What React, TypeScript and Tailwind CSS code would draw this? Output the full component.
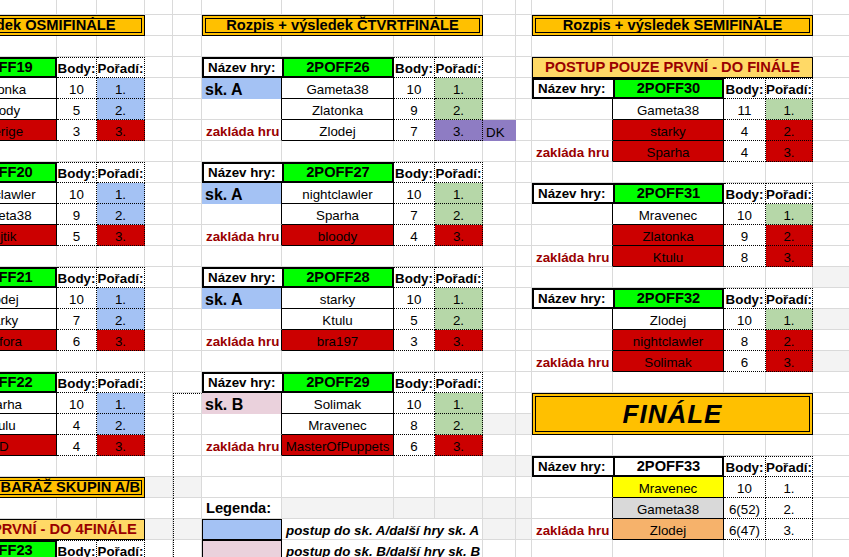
import React from "react";

type Cell = { t?: React.ReactNode; c: string; span?: number };
type Cells = Record<number, Cell>;

// gridline cells
const GRID = "border-r border-b border-[#dadada]";
const GRAY = "bg-[#f3f3f3] border-r border-b border-[#dadada]";
const PAGE = "border-r border-b border-l border-[#dadada] border-l-black [border-left-style:dotted]";
const PAGE_GRAY = PAGE + " bg-[#f3f3f3]";
const PAGE_TOP = PAGE + " border-t border-t-black [border-top-style:dotted]";

const TITLE =
  "col-span-4 flex items-center justify-center bg-[#ffc000] border-[4px] border-double border-black font-bold text-[14.67px] whitespace-nowrap";
const NOTE =
  "col-span-4 flex items-end justify-center pb-[2px] bg-[#ffd966] border border-black font-bold text-[14.67px] text-[#990000] whitespace-nowrap";

const NAZEV = "flex items-end pb-[2px] pl-[4px] border-y-2 border-l-2 border-black font-bold text-[13.33px] whitespace-nowrap";
const CODE = "flex items-end justify-center pb-[1px] border-2 border-black font-bold text-[14.67px] whitespace-nowrap";
const BP_HDR =
  "flex items-end justify-center pb-[2px] border-y border-r border-dotted border-black font-bold text-[13.33px] whitespace-nowrap";

const LBL_BLANK = "border-r border-b border-r-black border-b-[#dadada]";
const LBL_A = "flex items-end pb-[1px] pl-[3px] bg-[#a4c2f4] border-r border-r-black font-bold text-[16px]";
const LBL_B = "flex items-end pb-[1px] pl-[3px] bg-[#ead1dc] border-r border-r-black font-bold text-[16px]";
const LBL_ZAK =
  "flex items-end pb-[2px] pl-[4px] border-r border-b border-r-black border-b-[#dadada] font-bold text-[13.33px] text-[#990000] whitespace-nowrap";

const NAME = "flex items-end justify-center pb-[2px] border-r border-b border-black text-[13.33px] whitespace-nowrap";
const DOT = "flex items-end justify-center pb-[2px] border-r border-b border-dotted border-black text-[13.33px]";

const BG: Record<string, string> = {
  w: "",
  red: " bg-[#cc0000]",
  blue: " bg-[#a4c2f4]",
  green: " bg-[#b6d7a8]",
  purple: " bg-[#8e7cc3]",
  yellow: " bg-[#ffff00]",
  grey: " bg-[#d9d9d9]",
  orange: " bg-[#f6b26b]",
  lime: " bg-[#00ff00]",
};

function header(b: number, code: string, bg = "lime"): Cells {
  return {
    [b]: { t: "Název hry:", c: NAZEV },
    [b + 1]: { t: code, c: CODE + BG[bg] },
    [b + 2]: { t: "Body:", c: BP_HDR },
    [b + 3]: { t: "Pořadí:", c: BP_HDR },
  };
}

function player(b: number, label: "A" | "B" | "zak" | "", name: string, nameBg: string, body: string, pos: string, posBg: string): Cells {
  const lbl =
    label === "A"
      ? { t: "sk. A", c: LBL_A }
      : label === "B"
        ? { t: "sk. B", c: LBL_B }
        : label === "zak"
          ? { t: "zakláda hru", c: LBL_ZAK }
          : { c: LBL_BLANK };
  return {
    [b]: lbl,
    [b + 1]: { t: name, c: NAME + BG[nameBg] },
    [b + 2]: { t: body, c: DOT },
    [b + 3]: { t: pos, c: DOT + BG[posBg] },
  };
}

function row(r: number, cells: Cells, skip: number[] = []) {
  const out: React.ReactNode[] = [];
  let c = 0;
  while (c < 17) {
    if (skip.includes(c)) {
      c++;
      continue;
    }
    const cell = cells[c];
    if (cell) {
      out.push(
        <div key={`${r}-${c}`} className={cell.c}>
          {cell.t}
        </div>
      );
      c += cell.span ?? 1;
    } else {
      out.push(<div key={`${r}-${c}`} className={GRID} />);
      c++;
    }
  }
  return out;
}

export default function App() {
  const rows = [
    row(0, {}),
    row(1, {
      0: { t: "Rozpis + výsledek OSMIFINÁLE", c: TITLE, span: 4 },
      6: { t: "Rozpis + výsledek ČTVRTFINÁLE", c: TITLE, span: 4 },
      12: { t: "Rozpis + výsledek SEMIFINÁLE", c: TITLE, span: 4 },
    }),
    row(2, {}),
    row(3, {
      ...header(0, "2POFF19"),
      ...header(6, "2POFF26"),
      12: { t: "POSTUP POUZE PRVNÍ - DO FINÁLE", c: NOTE, span: 4 },
    }),
    row(4, {
      ...player(0, "", "Zlatonka", "w", "10", "1.", "blue"),
      ...player(6, "A", "Gameta38", "w", "10", "1.", "green"),
      ...header(12, "2POFF30"),
    }),
    row(5, {
      ...player(0, "", "bloody", "w", "5", "2.", "blue"),
      ...player(6, "", "Zlatonka", "w", "9", "2.", "green"),
      ...player(12, "", "Gameta38", "w", "11", "1.", "green"),
    }),
    row(6, {
      ...player(0, "", "Sverige", "red", "3", "3.", "red"),
      ...player(6, "zak", "Zlodej", "w", "7", "3.", "purple"),
      10: { t: "DK", c: "flex items-end pb-[2px] pl-[3px] bg-[#8e7cc3] text-[13.33px]" },
      ...player(12, "", "starky", "red", "4", "2.", "red"),
    }),
    row(7, {
      ...player(12, "zak", "Sparha", "red", "4", "3.", "red"),
    }),
    row(8, {
      ...header(0, "2POFF20"),
      ...header(6, "2POFF27"),
    }),
    row(9, {
      ...player(0, "", "nightclawler", "w", "10", "1.", "blue"),
      ...player(6, "A", "nightclawler", "w", "10", "1.", "green"),
      ...header(12, "2POFF31"),
    }),
    row(10, {
      ...player(0, "", "Gameta38", "w", "9", "2.", "blue"),
      ...player(6, "", "Sparha", "w", "7", "2.", "green"),
      ...player(12, "", "Mravenec", "w", "10", "1.", "green"),
    }),
    row(11, {
      ...player(0, "", "Vojtik", "red", "5", "3.", "red"),
      ...player(6, "zak", "bloody", "red", "4", "3.", "red"),
      ...player(12, "", "Zlatonka", "red", "9", "2.", "red"),
    }),
    row(12, {
      ...player(12, "zak", "Ktulu", "red", "8", "3.", "red"),
    }),
    row(13, {
      ...header(0, "2POFF21"),
      ...header(6, "2POFF28"),
      16: { c: GRAY },
    }),
    row(14, {
      ...player(0, "", "Zlodej", "w", "10", "1.", "blue"),
      ...player(6, "A", "starky", "w", "10", "1.", "green"),
      ...header(12, "2POFF32"),
    }),
    row(15, {
      ...player(0, "", "starky", "w", "7", "2.", "blue"),
      ...player(6, "", "Ktulu", "w", "5", "2.", "green"),
      ...player(12, "", "Zlodej", "w", "10", "1.", "green"),
      16: { c: GRAY },
    }),
    row(16, {
      ...player(0, "", "Amfora", "red", "6", "3.", "red"),
      ...player(6, "zak", "bra197", "red", "3", "3.", "red"),
      ...player(12, "", "nightclawler", "red", "8", "2.", "red"),
    }),
    row(17, {
      ...player(12, "zak", "Solimak", "red", "6", "3.", "red"),
      16: { c: GRAY },
    }),
    row(18, {
      ...header(0, "2POFF22"),
      ...header(6, "2POFF29"),
    }),
    row(19, {
      ...player(0, "", "Sparha", "w", "10", "1.", "blue"),
      5: { c: PAGE_TOP },
      ...player(6, "B", "Solimak", "w", "10", "1.", "green"),
      12: {
        t: "FINÁLE",
        c: "col-span-4 row-span-2 flex items-center justify-center bg-[#ffc000] border-[4px] border-double border-black font-bold italic text-[26px] tracking-[1px]",
        span: 4,
      },
    }),
    row(
      20,
      {
        ...player(0, "", "Ktulu", "w", "4", "2.", "blue"),
        5: { c: PAGE },
        ...player(6, "", "Mravenec", "w", "8", "2.", "green"),
        10: { c: GRAY },
        11: { c: GRAY },
      },
      [12, 13, 14, 15]
    ),
    row(21, {
      ...player(0, "", "JD", "red", "4", "3.", "red"),
      5: { c: PAGE },
      ...player(6, "zak", "MasterOfPuppets", "red", "6", "3.", "red"),
    }),
    row(22, {
      5: { c: PAGE },
      10: { c: GRAY },
      11: { c: GRAY },
      ...header(12, "2POFF33", "w"),
    }),
    row(23, {
      0: { t: "Rozpis + výsledek BARÁŽ SKUPIN A/B", c: TITLE, span: 4 },
      4: { c: GRAY },
      5: { c: PAGE_GRAY },
      ...player(12, "", "Mravenec", "yellow", "10", "1.", "w"),
    }),
    row(24, {
      5: { c: PAGE },
      6: { t: "Legenda:", c: "flex items-end pb-[2px] pl-[4px] font-bold text-[14.67px] " + GRID },
      7: { c: GRAY },
      8: { c: GRAY },
      9: { c: GRAY },
      10: { c: GRAY },
      11: { c: GRAY },
      ...player(12, "", "Gameta38", "grey", "6(52)", "2.", "w"),
    }),
    row(25, {
      0: { t: "POSTUP POUZE PRVNÍ - DO 4FINÁLE", c: NOTE, span: 4 },
      4: { c: GRAY },
      5: { c: PAGE_GRAY },
      6: { c: "bg-[#a4c2f4] border border-black" },
      7: {
        t: "postup do sk. A/další hry sk. A",
        c: "col-span-3 flex items-end pb-[2px] pl-[4px] font-bold italic text-[13.33px] whitespace-nowrap " + GRID,
        span: 3,
      },
      10: { c: GRAY },
      11: { c: GRAY },
      ...player(12, "zak", "Zlodej", "orange", "6(47)", "3.", "w"),
    }),
    row(26, {
      ...header(0, "2POFF23"),
      5: { c: PAGE },
      6: { c: "bg-[#ead1dc] border border-black" },
      7: {
        t: "postup do sk. B/další hry sk. B",
        c: "col-span-3 flex items-end pb-[2px] pl-[4px] font-bold italic text-[13.33px] whitespace-nowrap " + GRID,
        span: 3,
      },
    }),
  ];

  return (
    <div className="w-[849px] h-[557px] overflow-hidden bg-white text-black font-['Liberation_Sans',Arial,sans-serif]">
      <div className="grid w-max -ml-[135px] -mt-[6px] grid-cols-[80px_112px_40px_48px_28px_29px_80px_112px_41px_48px_33px_16px_81px_111px_42px_47px_60px] auto-rows-[21px] leading-none">
        {rows}
      </div>
    </div>
  );
}
